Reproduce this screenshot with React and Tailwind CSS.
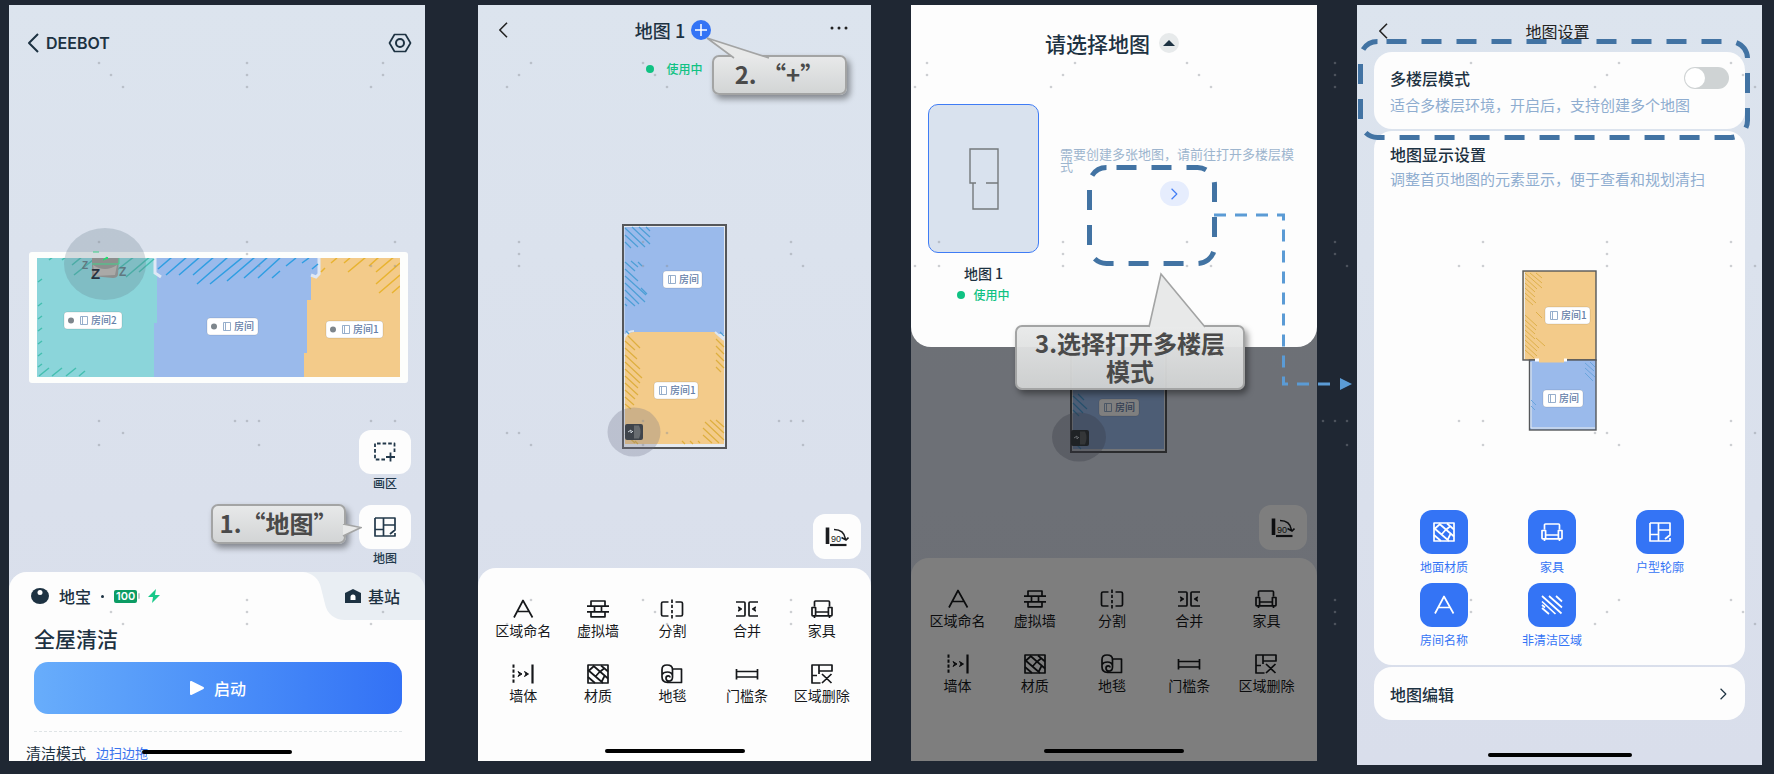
import React from "react";

const cjk = "font-['Noto_Sans_CJK_SC','Liberation_Sans',sans-serif]";

/* ---------- icons ---------- */

function Icon({ children, className = "w-6 h-5", box = "0 0 24 20", width = 1.7 }) {
  return (
    <svg
      viewBox={box}
      className={className + " shrink-0"}
      fill="none"
      stroke="currentColor"
      strokeWidth={width}
      strokeLinejoin="round"
      aria-hidden="true"
    >
      {children}
    </svg>
  );
}

const glyphs = {
  name: <path d="M3 18.500 12 1.500 21.500 18.500M6.500 12.500H18" />,
  wall: <path d="M5 7V2h14v5M1 7.200h22M8.500 7.200v5.600M15.500 7.200v5.600M1 12.800h22M5 12.800v5h14v-5" />,
  split: (
    <>
      <path d="M8.500 3H3q-1.500 0-1.500 1.500v11Q1.500 17 3 17h5.500M15.500 3H21q1.500 0 1.500 1.500v11Q22.500 17 21 17h-5.500" />
      <path d="M12 .5v19" strokeDasharray="3.400 1.800" />
    </>
  ),
  merge: (
    <>
      <path d="M1 3H9q1 0 1 1v12q0 1-1 1H1M23 3H15q-1 0-1 1v12q0 1 1 1h8" />
      <path d="M3.500 8l3 2-3 2 .8-2zM20.500 8l-3 2 3 2-.8-2z" fill="currentColor" strokeWidth="1.200" />
    </>
  ),
  sofa: (
    <path d="M4.500 7.500V3q0-1 1-1h13q1 0 1 1v4.500M2 8.500h3.600v8.300H2.800q-.8 0-.8-.8zM22 8.500h-3.600v8.300h2.800q.8 0 .8-.8zM5.600 13h12.800M5.600 16.800h12.800M4.500 17v2M19.500 17v2" />
  ),
  body: (
    <>
      <path d="M2.500 .5v19" strokeDasharray="3.200 1.800" strokeWidth="2" />
      <path d="M21.500 .5v19" strokeWidth="2.200" />
      <path d="M7 7.500l4 2.500-4 2.500 1.500-2.500zM13.500 7.500l4 2.500-4 2.500 1.500-2.500z" fill="currentColor" strokeWidth="1" />
    </>
  ),
  material: (
    <>
      <rect x="2" y="1" width="20" height="18" />
      <path d="M7 1.500 22 14.500M15 1.500l7 6M2 6l15 13M2 13l7 6M9.500 12.500l4-4.500M15.500 18l3-6M3 6.500l4.500-4M13 8.500l5-4" />
    </>
  ),
  carpet: (
    <path d="M12.500 5H21.500v13.500H7.500Q2 18 2 13V5.500Q2 1 7 1q5.500 0 5.500 4.500v7.500q0 4-3.500 4-3 0-3-2.800 0-2.400 2.200-2.400 1.800 0 1.800 1.700M2 13V10.500Q3.500 8 7.500 8q4 0 5 3.500" />
  ),
  sill: <path d="M1.500 5v10.500M22.500 5v10.500M1.500 7.500h21M1.500 13h21" />,
  remove: <path d="M10.500 19H2V1h20v6H9V1M9 7v3M2 11.500h5M12 10l9.500 9M21.500 10 12 19" />,
  plan: <path d="M2 1h20v12l-5 4M22 16v3H2V1M10.500 1v18M2 12.500h8.500M10.500 8H22" />,
  hatch: <path d="M2 13l7 6M2 6.500 15.500 19M2 1l19.500 17.500M9 1l13 11.500M16 1l6 5.500M2 10l3 2.500" />,
  select: (
    <>
      <path d="M12 17.500H2V1.500h19.500v9" strokeDasharray="3.600 2" strokeWidth="1.800" />
      <path d="M17.500 10.500v9M13 15h9" strokeWidth="1.800" />
    </>
  ),
};

function Chevron({ dir = "left", className = "w-3 h-5" }) {
  return (
    <Icon box="0 0 12 20" className={className} width={2}>
      <path d={dir === "left" ? "M11 1 2 10l9 9" : "M1 1l9 9-9 9"} />
    </Icon>
  );
}

function RotateIcon() {
  return (
    <svg viewBox="0 0 24 20" className="w-6 h-5" fill="none" stroke="currentColor" aria-hidden="true">
      <path d="M2.500 .5v16.500" strokeWidth="3.600" />
      <path d="M5 18h16.500" strokeWidth="2.200" />
      <path d="M9 2.500q10 0 11.500 9.500M16.500 10.500l4.500 2.500 2.500-2.500" strokeWidth="1.600" />
      <text x="6" y="14.500" fontSize="9" fontFamily="Liberation Sans, sans-serif" fill="currentColor" stroke="none">
        90
      </text>
    </svg>
  );
}

/* ---------- shared pieces ---------- */

function HomeBar({ className }) {
  return <div className={"mx-auto h-1 rounded-full bg-black " + className} />;
}

function InUse({ className = "" }) {
  return (
    <div className={"flex items-center gap-2 text-[12px] leading-[18px] text-[#10c283] font-medium " + className}>
      <span className="size-2 rounded-full bg-[#10c283]" />
      使用中
    </div>
  );
}

function RoomTag({ x, y, w, label, dot = false }) {
  const start = dot ? 16 : 5;
  return (
    <g>
      <rect x={x} y={y} width={w} height="17" rx="3" fill="#fff" stroke="#00000022" strokeWidth=".8" />
      {dot && <circle cx={x + 7} cy={y + 8.500} r="3" fill="#7e868c" />}
      <path
        d={`M${x + start + 0.500} ${y + 4.500}h7v8h-7zM${x + start + 2.500} ${y + 4.500}v8`}
        fill="none"
        stroke="#8ba6c6"
        strokeWidth=".9"
      />
      <text
        x={x + start + 11}
        y={y + 12.200}
        fontSize="10"
        fontWeight="500"
        fontFamily="Noto Sans CJK SC, sans-serif"
        fill="#6580a8"
      >
        {label}
      </text>
    </g>
  );
}

function Callout({ className, tail, tailClass, tailBox, children }) {
  return (
    <div
      className={
        "absolute z-20 flex items-center justify-center rounded-[7px] border-2 border-[#a3a4a4] bg-linear-to-b from-[#e8e9e9]/95 to-[#d2d4d4]/95 pb-[2px] text-center text-[24px] leading-7 font-bold text-[#4a4a4a] shadow-[3px_4px_6px_rgba(0,0,0,0.4)] " +
        className
      }
    >
      <svg viewBox={tailBox} className={"absolute " + tailClass} fill="#e8e9e9" stroke="#a3a4a4" strokeWidth="1.600" aria-hidden="true">
        <path d={tail} />
      </svg>
      <span className="relative">{children}</span>
    </div>
  );
}

const tools = [
  ["name", "区域命名"],
  ["wall", "虚拟墙"],
  ["split", "分割"],
  ["merge", "合并"],
  ["sofa", "家具"],
  ["body", "墙体"],
  ["material", "材质"],
  ["carpet", "地毯"],
  ["sill", "门槛条"],
  ["remove", "区域删除"],
];

function ToolSheet() {
  return (
    <section className="flex grow flex-col rounded-t-[18px] bg-[#fdfdfd] pt-[31px] pb-2 text-[#16181b]">
      <div className="grid grid-cols-5 gap-y-[25px] pr-3 pl-2">
        {tools.map(([icon, label]) => (
          <button key={icon} type="button" className="flex flex-col items-center gap-[2px]">
            <Icon>{glyphs[icon]}</Icon>
            <span className="text-[14px] leading-[18px] whitespace-nowrap">{label}</span>
          </button>
        ))}
      </div>
      <HomeBar className="mt-auto w-[140px]" />
    </section>
  );
}

function RotateButton() {
  return (
    <button
      type="button"
      aria-label="旋转90度"
      className="mr-[10px] flex h-[45px] w-12 items-center justify-center self-end rounded-xl bg-[#fdfdfd] text-[#1b1d20]"
    >
      <RotateIcon />
    </button>
  );
}

const phone = "relative flex flex-col bg-linear-to-b from-[#dce4ee] to-[#d9deeb]";

/* ---------- screen 1: home ---------- */

function HomeMap() {
  return (
    <svg viewBox="0 0 379 131" className="w-full overflow-visible" role="img" aria-label="地图">
      <defs>
        <clipPath id="homeRooms">
          <rect x="8" y="6" width="363" height="119" />
        </clipPath>
      </defs>
      <rect width="379" height="131" rx="3" fill="#fdfefc" />
      <g clipPath="url(#homeRooms)">
        <rect x="8" y="6" width="363" height="119" fill="#f3cb8a" />
        <path d="M8 6H290V24h-8v24h-4v53h-3v24H8z" fill="#9abaeb" />
        <path d="M8 6H125V20l3 4v47h-3v54H8z" fill="#8bd5da" />
        <path d="M126 4v17l6 4M290 4v18l-3 3-5-2" fill="none" stroke="#dfe8f5" strokeWidth="3" />
        <g stroke="#2f9ee2" strokeWidth="1.500">
          <path d="M129 17l14-12M137 23l22-19M150 23l22-19M164 23l22-19M168 32l31-27M181 32l33-27M198 29l28-24M215 26l25-22M229 26l22-20M243 26l8-7M257 14l10-8M273 11l7-5M283 17l6-5" />
        </g>
        <g stroke="#45bfb0" strokeWidth="1.500">
          <path d="M20 8l5-4M33 8l5-4M43 13l11-9M45 23l24-19M97 25l26-22M110 20l15-13M88 18l18-14M9 30l4-3M9 54l4-3M9 67l4-3M9 79l4-3M9 92l4-3M9 104l4-3M9 115l4-3M10 124l10-8M23 124l10-8M37 124l10-8M50 124l6-5" />
        </g>
        <g stroke="#e8b330" strokeWidth="1.500">
          <path d="M292 20l4-4M302 11l6-5M315 11l6-5M319 20l18-15M340 14l10-9M347 20l19-16M347 32l24-21M350 41l21-18M363 41l8-7" />
        </g>
      </g>
      <ellipse cx="76" cy="12" rx="41" ry="36" fill="#5f7688" fillOpacity=".26" />
      <path d="M63 6h27l-1 17q-1 3-5 3l-21-2z" fill="#8d8f8e" />
      <path d="M64 13q12 8 24 0l-2 10-20 1z" fill="#aaa9a7" />
      <path d="M64 0h6M63 12h27V6" stroke="#40d08a" fill="none" />
      <path d="M74 8l4-3 1 1z" fill="#20e070" stroke="#20e070" />
      <g fontFamily="Liberation Sans, sans-serif" fontWeight="bold">
        <text x="62" y="27" fontSize="15" fill="#28323f">Z</text>
        <text x="53" y="17" fontSize="10" fill="#607780">Z</text>
        <text x="90" y="24" fontSize="12" fill="#607780">Z</text>
      </g>
      <RoomTag x={35} y={60} w={58} label="房间2" dot />
      <RoomTag x={178} y={66} w={51} label="房间" dot />
      <RoomTag x={297} y={69} w={57} label="房间1" dot />
    </svg>
  );
}

function SideButton({ icon, label }) {
  return (
    <button type="button" className="flex flex-col items-center text-[#22384a]">
      <span className="flex h-11 w-[52px] items-center justify-center rounded-xl bg-[#fdfdfd]">
        <Icon>{glyphs[icon]}</Icon>
      </span>
      <span className="text-[12px] leading-[18px] font-medium">{label}</span>
    </button>
  );
}

function HomeScreen() {
  return (
    <section className={phone + " mr-[53px] flex-[416_1_0%] self-start text-[#1d3242]"}>
      <header className="flex h-[76px] items-center justify-between pr-[13px] pl-[18px]">
        <button type="button" className="flex items-center gap-[7px]">
          <Chevron />
          <span className="font-['Inter',sans-serif] text-[16px] leading-5 font-semibold">DEEBOT</span>
        </button>
        <button type="button" aria-label="设置">
          <Icon box="0 0 24 20" width={1.7}>
            <path d="M6.500 1.500h11L22.500 10l-5 8.500h-11L1.500 10z" />
            <circle cx="12" cy="10" r="4" strokeWidth="2" />
          </Icon>
        </button>
      </header>

      <div className="pt-[171px] pr-[17px] pl-5">
        <HomeMap />
      </div>

      <div className="mt-[47px] mr-[14px] mb-[5px] flex flex-col gap-[13px] self-end">
        <SideButton icon="select" label="画区" />
        <SideButton icon="plan" label="地图" />
      </div>

      <div className="rounded-t-[18px] bg-[#e9eef3]">
        <div className="flex h-12 items-stretch">
          <div className="flex grow items-center rounded-tl-[18px] bg-[#fdfdfd] pl-[22px]">
            <Icon box="0 0 18 16" className="h-4 w-[18px]" width={0}>
              <ellipse cx="9" cy="8" rx="9" ry="8" fill="currentColor" />
              <circle cx="9" cy="4.500" r="2.500" fill="#fff" />
            </Icon>
            <span className="ml-[10px] text-[16px] leading-5 font-medium">地宝</span>
            <span className="mx-[10px] size-[3px] rounded-full bg-[#1d3242]" />
            <span className="rounded-xs bg-[#0c9c64] px-[2px] font-['Inter',sans-serif] text-[11px] leading-[13px] font-semibold text-white">
              100
            </span>
            <span className="ml-px h-[6px] w-[2px] rounded-xs bg-[#c4cacc]" />
            <svg viewBox="0 0 12 14" className="ml-2 h-[14px] w-3 fill-[#16c888]" aria-hidden="true">
              <path d="M8 0 0 8h5l-1 6 8-8H7z" />
            </svg>
          </div>
          <svg viewBox="0 0 44 48" className="h-12 w-11 shrink-0 fill-[#fdfdfd]" aria-hidden="true">
            <path d="M0 0h2C12 1 18 7 20 16l4 16C26 42 34 48 44 48H0z" />
          </svg>
          <button type="button" className="flex items-center gap-[7px] pr-[25px] text-[16px] leading-5 font-medium">
            <svg viewBox="0 0 16 14" className="h-[14px] w-4" aria-hidden="true">
              <path d="M8 0 16 4v10H0V4z" fill="currentColor" />
              <path d="M5.500 11V8a2.500 2.500 0 0 1 5 0v3z" fill="#fff" />
            </svg>
            基站
          </button>
        </div>
        <div className="relative bg-[#fdfdfd] px-[23px] pt-1 pl-[25px]">
          <h2 className="text-[21px] leading-7 font-medium">全屋清洁</h2>
          <button
            type="button"
            className="mt-[10px] flex h-[52px] w-full items-center justify-center gap-[10px] rounded-[14px] bg-linear-to-r from-[#68adfb] to-[#3371f5] text-[16px] leading-5 font-medium text-white"
          >
            <svg viewBox="0 0 14 14" className="size-[14px]" fill="#fff" stroke="#fff" strokeWidth="2" strokeLinejoin="round" aria-hidden="true">
              <path d="M1 1v12l12-6z" />
            </svg>
            启动
          </button>
          <hr className="mt-[17px] border-t border-dashed border-[#dfe4e6]" />
          <div className="-ml-2 flex h-[29px] items-center gap-[10px] pt-3 leading-4">
            <span className="text-[15px]">清洁模式</span>
            <a href="#mode" className="text-[13px] text-[#3873ee] no-underline">边扫边拖</a>
          </div>
          <HomeBar className="absolute inset-x-0 bottom-[7px] w-[150px]" />
        </div>
      </div>

      <Callout
        className="top-[499px] right-[79px] h-10 w-[135px]"
        tailBox="0 0 20 14"
        tailClass="-right-[18px] bottom-1 h-[14px] w-5"
        tail="M1 0 19 3.500 1 12"
      >
        1.“地图”
      </Callout>
    </section>
  );
}

/* ---------- screen 2: map editor ---------- */

function Robot({ x, y }) {
  return (
    <g>
      <rect x={x} y={y} width="18" height="16" rx="2" fill="#3f444b" />
      <path d={`M${x + 9} ${y + 1.500}h5q3 6 0 13h-5z`} fill="#686c70" />
      <path d={`M${x + 3} ${y + 8}l3-2v3l2-2`} stroke="#cdd3da" fill="none" />
    </g>
  );
}

function EditorMap() {
  return (
    <svg viewBox="0 0 105 225" className="h-[225px] w-[105px] overflow-visible" role="img" aria-label="地图 1">
      <rect x="1" y="1" width="103" height="223" fill="#e6ebf0" stroke="#55575a" strokeWidth="2" />
      <rect x="2.500" y="3" width="99.500" height="107" fill="#9abaeb" />
      <path d="M3 116q1-8 9-8h82l8 8v104H3z" fill="#f3cb8a" />
      <path d="M3 113q2-6 9-6M93 108l9 8" fill="none" stroke="#dce6f2" strokeWidth="2" />
      <g stroke="#4d9fd6" strokeWidth="1.200" fill="none">
        <path d="M3 4l20 19M10 3l18 17M17 3l11 10M3 11l13 12M3 18l6 6M24 3l4 4M3 38l10 9M9 37l7 6M16 38l4 4M3 45l13 12M3 52l21 19M3 59l20 19M3 66l14 14M19 64l6 6M3 73l10 9M3 80l2 2M4 107l3 3M98 108l4 4" />
      </g>
      <g stroke="#deaf3f" strokeWidth="1.200" fill="none">
        <path d="M6 112l12 12M3 117l10 9M3 124l12 11M3 131l15 14M3 138l17 16M3 145l15 14M3 152l13 12M3 159l13 12M3 166l10 9M3 173l9 8M3 180l6 5M94 115l8 8M94 122l8 8M94 129l8 8M94 136l8 8M94 143l5 5M83 198l19 18M81 204l16 15M81 211l9 8M88 196l14 13M94 196l8 7M60 217l3 3M68 217l3 3M76 217l2 2M3 210l10 9M13 217l3 3" />
      </g>
      <RoomTag x={41} y={47} w={39} label="房间" />
      <RoomTag x={32} y={158} w={44} label="房间1" />
      <ellipse cx="12" cy="208" rx="26.500" ry="24.500" fill="#6d7186" fillOpacity=".28" />
      <Robot x={3} y={200} />
    </svg>
  );
}

function EditorScreen() {
  return (
    <section className={phone + " mr-10 min-h-[756px] flex-[393_1_0%] self-start"}>
      <header className="grid h-[50px] grid-cols-[1fr_auto_1fr] items-center pr-[23px] pl-5 text-[#1d3242]">
        <button type="button" aria-label="返回" className="justify-self-start text-[#222]">
          <Chevron className="h-4 w-[10px]" />
        </button>
        <h1 className="flex items-center gap-[6px] text-[18px] leading-6 font-medium">
          地图 1
          <button type="button" aria-label="新增地图" className="flex size-5 items-center justify-center rounded-full bg-[#3474f5] text-white">
            <Icon box="0 0 14 14" className="size-[14px]" width={1.5}>
              <path d="M7 1v12M1 7h12" />
            </Icon>
          </button>
        </h1>
        <button type="button" aria-label="更多" className="mb-1 justify-self-end">
          <svg viewBox="0 0 20 4" className="h-1 w-5 fill-[#222]" aria-hidden="true">
            <circle cx="4" cy="2" r="1.500" />
            <circle cx="11" cy="2" r="1.500" />
            <circle cx="18" cy="2" r="1.500" />
          </svg>
        </button>
      </header>
      <InUse className="h-7 justify-center gap-3" />
      <div className="mt-[141px] mb-[65px] flex justify-center">
        <EditorMap />
      </div>
      <RotateButton />
      <div className="mt-[9px] flex grow flex-col">
        <ToolSheet />
      </div>

      <Callout
        className="top-[50px] right-[24px] h-10 w-[135px]"
        tailBox="0 0 66 22"
        tailClass="-top-[20px] -left-[8px] h-[22px] w-[66px]"
        tail="M28 21 1 1l62 20"
      >
        2. “+”
      </Callout>
    </section>
  );
}

/* ---------- screen 3: map picker ---------- */

function DimmedMap() {
  return (
    <svg viewBox="0 0 97 162" className="h-[162px] w-[97px] overflow-visible" role="img" aria-label="地图">
      <rect x="1" y="1" width="95" height="160" fill="#e6ebf0" stroke="#55575a" strokeWidth="2" />
      <rect x="3" y="3" width="91" height="34" fill="#f3cb8a" />
      <rect x="3" y="37" width="91" height="121" fill="#9abaeb" />
      <path d="M3 105l14 13M3 112l10 10M3 119l6 6M8 103l6 6M3 150l8 8" stroke="#4d9fd6" strokeWidth="1.200" />
      <RoomTag x={29} y={108} w={40} label="房间" />
      <ellipse cx="9" cy="146" rx="27" ry="24.500" fill="#6d7186" fillOpacity=".32" />
      <Robot x={1} y={139} />
    </svg>
  );
}

function PickerScreen() {
  return (
    <section className={phone + " mr-10 min-h-[756px] flex-[406_1_0%] self-start"}>
      <div className="mt-[286px] mb-[52px] flex justify-center pl-[9px]">
        <DimmedMap />
      </div>
      <RotateButton />
      <div className="mt-2 flex grow flex-col">
        <ToolSheet />
      </div>

      <div className="absolute inset-0 bg-black/50">
        <div role="dialog" aria-label="请选择地图" className="h-[342px] rounded-b-[20px] bg-[#fdfdfd] text-[#1d3242]">
          <div className="flex h-[76px] items-center justify-center gap-[9px] pr-1">
            <h2 className="text-[21px] leading-7 font-medium">请选择地图</h2>
            <button type="button" aria-label="收起" className="flex size-5 items-center justify-center rounded-full bg-[#e7eaeb]">
              <svg viewBox="0 0 12 6" className="h-[6px] w-3 fill-[#1d3242]" aria-hidden="true">
                <path d="M6 0l6 6H0z" />
              </svg>
            </button>
          </div>
          <div className="mt-[23px] flex pl-[17px]">
            <div className="flex w-[111px] shrink-0 flex-col items-center">
              <button
                type="button"
                aria-label="选择地图 1"
                className="flex h-[149px] w-full items-center justify-center rounded-[10px] border border-[#3f7cf5] bg-[#d9e2ee]"
              >
                <svg viewBox="0 0 30 62" className="h-[62px] w-[30px]" fill="none" stroke="#74797c" strokeWidth="1.400" aria-hidden="true">
                  <path d="M7 35H1V1h28v60H4V35M17 35h12" />
                </svg>
              </button>
              <h3 className="mt-[11px] text-[14px] leading-[18px] font-medium">地图 1</h3>
              <InUse className="mt-1" />
            </div>
            <div className="mt-11 ml-[21px] w-[236px]">
              <p className="text-[13px] leading-3 text-[#9db5ce]">需要创建多张地图，请前往打开多楼层模式</p>
              <button
                type="button"
                aria-label="打开多楼层模式"
                className="ml-[100px] mt-[9px] flex h-[25px] w-[29px] items-center justify-center rounded-full bg-[#e6edfd] text-[#3f7cf5]"
              >
                <Chevron dir="right" className="h-3 w-[7px]" />
              </button>
            </div>
          </div>
        </div>
      </div>

      <svg viewBox="0 0 270 235" className="absolute top-[158px] left-[174px] z-10 h-[235px] w-[270px]" fill="none" aria-hidden="true">
        <rect x="4.500" y="4.500" width="125" height="96" rx="17" stroke="#4273a3" strokeWidth="5" strokeDasharray="20 15" strokeDashoffset="-10" />
        <path d="M129 52H198.500V221H250" stroke="#5b9bd5" strokeWidth="3" strokeDasharray="12 9" />
        <path d="M255 215l12 6-12 6z" fill="#5b9bd5" />
      </svg>

      <Callout
        className="top-[320px] left-[104px] h-[65px] w-[230px] px-3"
        tailBox="0 0 60 56"
        tailClass="-top-[55px] left-[131px] h-14 w-[60px]"
        tail="M1 55 13 2 57 55"
      >
        3.选择打开多楼层模式
      </Callout>
    </section>
  );
}

/* ---------- screen 4: map settings ---------- */

function SettingsMap() {
  return (
    <svg viewBox="0 0 75 161" className="h-[161px] w-[75px]" role="img" aria-label="地图">
      <rect x="1" y="1" width="73" height="89" fill="#f3cb8a" stroke="#55575a" strokeWidth="1.400" />
      <rect x="7.500" y="90" width="66.500" height="70" fill="#9abaeb" stroke="#55575a" strokeWidth="1.400" />
      <path d="M2.500 2v87M9 92v66h64" stroke="#e8ecee" fill="none" />
      <path d="M17 89h25v3.500H17z" fill="#f3cb8a" />
      <path d="M13 90h4M42 90h3" stroke="#fff" strokeWidth="3" />
      <g stroke="#deb04a" strokeWidth="1">
        <path d="M3 3l17 15M8 3l12 10M14 3l6 5M3 8l12 11M3 13l10 9M3 18l10 9M3 23l11 10M3 28l8 7M3 45l12 11M3 50l11 10M3 55l10 9M3 60l10 9M14 42l6 6M3 65l14 13M3 70l12 11M3 75l12 11M14 68l9 8M3 80l9 8" />
      </g>
      <path d="M63 93l9 8M68 92l5 5M63 98l10 9M63 103l8 8M9 130l5 5M9 136l4 4" stroke="#6aa5dc" />
      <RoomTag x={23} y={37} w={45} label="房间1" />
      <RoomTag x={21} y={120} w={40} label="房间" />
    </svg>
  );
}

const layers = [
  ["material", "地面材质"],
  ["sofa", "家具"],
  ["plan", "户型轮廓"],
  ["name", "房间名称"],
  ["hatch", "非清洁区域"],
];

function SettingsScreen() {
  return (
    <section className={phone + " mr-3 flex-[405_1_0%] self-start pb-2 text-[#1d3242]"}>
      <header className="relative flex h-[47px] items-center justify-center pt-1 pr-1 text-[#222]">
        <button type="button" aria-label="返回" className="absolute left-[21px]">
          <Chevron className="h-4 w-[10px]" />
        </button>
        <h1 className="text-[16px] leading-5">地图设置</h1>
      </header>

      <div className="flex flex-col gap-[2px] px-[17px]">
        <section className="h-[77px] rounded-[18px] bg-[#fdfdfd] pt-[15px] pr-4 pl-4">
          <div className="flex items-center justify-between">
            <label htmlFor="multi-floor" className="text-[16px] leading-[22px] font-medium">多楼层模式</label>
            <input
              id="multi-floor"
              type="checkbox"
              role="switch"
              className="h-[22px] w-[45px] appearance-none rounded-full bg-[#cfd3d4] before:m-px before:block before:size-5 before:rounded-full before:bg-white checked:bg-[#3474f5] checked:before:ml-6"
            />
          </div>
          <p className="mt-[6px] text-[15px] leading-5 whitespace-nowrap text-[#8fadd0]">适合多楼层环境，开启后，支持创建多个地图</p>
        </section>

        <section className="rounded-[18px] bg-[#fdfdfd] pt-3 pb-[18px] pl-4">
          <h2 className="text-[16px] leading-[22px] font-medium">地图显示设置</h2>
          <p className="mt-1 text-[15px] leading-5 whitespace-nowrap text-[#8fadd0]">调整首页地图的元素显示，便于查看和规划清扫</p>
          <div className="mt-[81px] mr-4 flex justify-center">
            <SettingsMap />
          </div>
          <div className="mt-[79px] mr-[31px] grid grid-cols-3 gap-y-[9px]">
            {layers.map(([icon, label]) => (
              <button key={icon} type="button" className="flex flex-col items-center gap-[5px] text-[#3474f5]">
                <span className="flex h-11 w-12 items-center justify-center rounded-xl bg-[#3474f5] text-white">
                  <Icon className="h-5 w-6">{glyphs[icon]}</Icon>
                </span>
                <span className="text-[12px] leading-[15px]">{label}</span>
              </button>
            ))}
          </div>
        </section>

        <a href="#edit" className="flex h-[53px] items-center justify-between rounded-[18px] bg-[#fdfdfd] pr-[18px] pl-4">
          <span className="text-[16px] leading-5 font-medium">地图编辑</span>
          <Chevron dir="right" className="h-3 w-[7px]" />
        </a>
      </div>
      <HomeBar className="mt-[33px] w-[144px]" />

      <svg className="absolute top-[34px] left-px z-10 h-[102px] w-[393px]" viewBox="0 0 393 102" fill="none" aria-hidden="true">
        <rect x="2.500" y="2.500" width="387" height="96" rx="17" stroke="#4273a3" strokeWidth="5" strokeDasharray="20 15" strokeDashoffset="-9" />
      </svg>
    </section>
  );
}

/* ---------- dotted overlay ---------- */

const dotRows = {
  63: [99, 247, 383, 531, 643, 791, 927, 1075, 1187, 1335, 1471, 1619, 1731],
  75: [111, 247, 383, 519, 655, 927, 1063, 1199, 1335, 1607, 1743],
  87: [123, 247, 371, 507, 667, 791, 915, 1051, 1211, 1335, 1459, 1595, 1755],
  242: [99, 247, 395, 519, 643, 791, 939, 1063, 1187, 1335, 1483, 1607, 1731],
  254: [247, 519, 791, 1063, 1335, 1607],
  266: [259, 371, 395, 519, 643, 667, 803, 915, 939, 1063, 1187, 1211, 1347, 1459, 1483, 1607, 1731, 1755],
  421: [99, 235, 247, 259, 371, 395, 643, 779, 791, 803, 1323, 1335, 1347, 1459, 1483, 1731],
  433: [123, 507, 519, 667, 1595, 1607, 1755],
  445: [99, 259, 531, 643, 803, 1347, 1483, 1619, 1731],
  600: [247, 531, 643, 791, 1335, 1471, 1619, 1731],
  612: [111, 247, 383, 655, 791, 1335, 1471, 1607, 1743],
  624: [123, 247, 371, 507, 667, 791, 1335, 1595, 1755],
};

function Dots() {
  return (
    <svg viewBox="0 0 1774 774" className="pointer-events-none absolute inset-x-0 top-0 z-10 w-full" fill="#8a9096" fillOpacity=".42" aria-hidden="true">
      {Object.entries(dotRows).map(([y, xs]) => xs.map((x) => <circle key={x + "-" + y} cx={x} cy={y} r="1.300" />))}
    </svg>
  );
}

export default function App() {
  return (
    <main className={"relative flex min-h-screen bg-[#1f2733] pt-[5px] pl-[9px] " + cjk}>
      <HomeScreen />
      <EditorScreen />
      <PickerScreen />
      <SettingsScreen />
      <Dots />
    </main>
  );
}
